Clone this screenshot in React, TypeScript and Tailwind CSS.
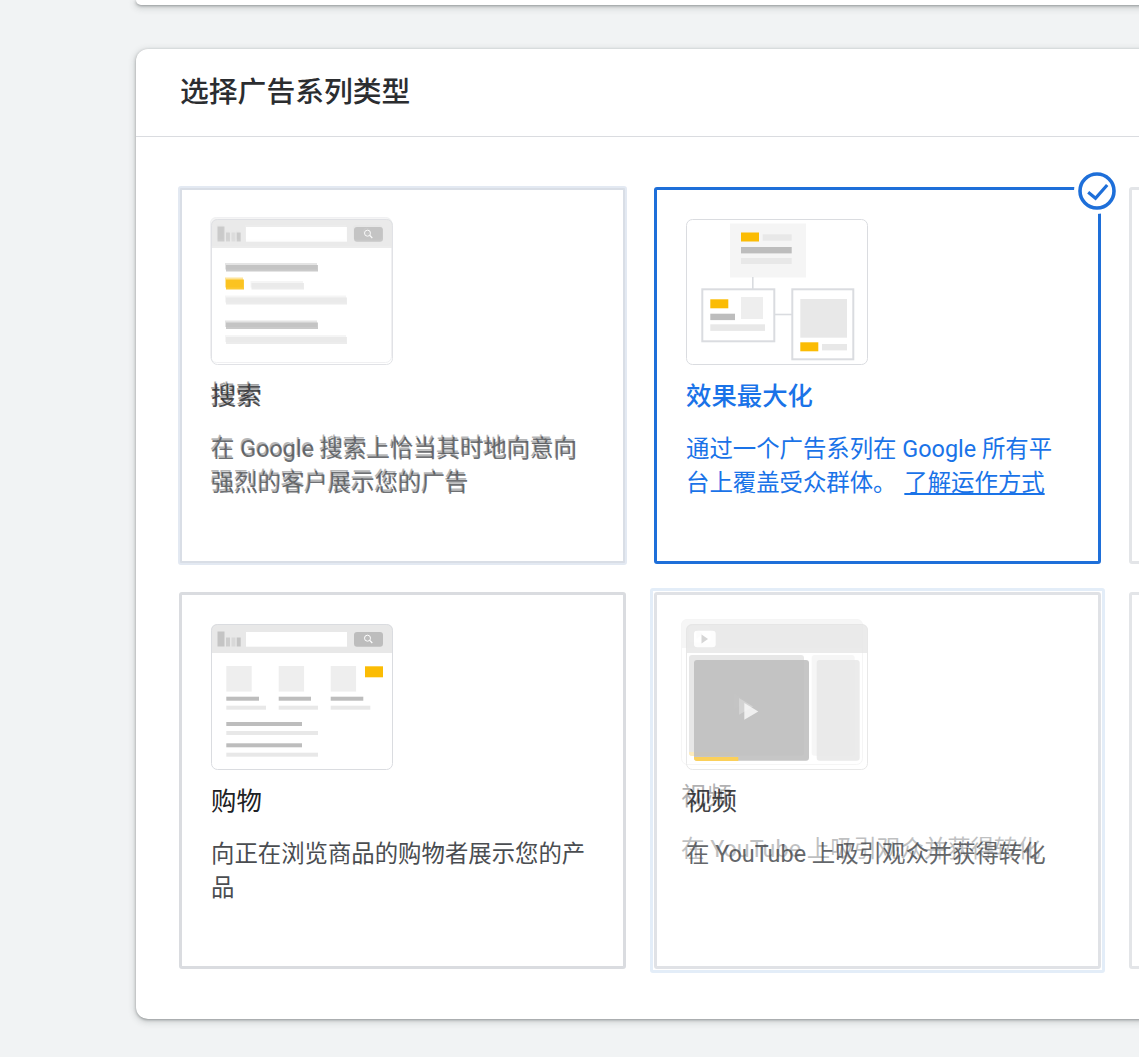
import React from "react";

const LINE = "#bdbdbd";
const SOFT = "#e8e8e8";
const YEL = "#fbbc04";
const EDGE = "#dadce0";

function SearchBar() {
  return (
    <>
      <path d="M0 29V6a6 6 0 0 1 6-6h170a6 6 0 0 1 6 6v23z" fill={SOFT} />
      <rect x="6.5" y="7.5" width="7" height="15" fill="#c4c4c4" />
      <rect x="15" y="13.5" width="4" height="9" fill="#cdcdcd" />
      <rect x="20.5" y="13.5" width="4" height="9" fill="#d8d8d8" />
      <rect x="25.7" y="13.5" width="4" height="9" fill="#c4c4c4" />
      <rect x="35" y="8" width="101" height="14.7" fill="#fff" />
      <rect x="143" y="8" width="29" height="14.7" rx="3" fill={LINE} />
      <circle cx="156.5" cy="14.2" r="3" fill="none" stroke="#fff" strokeWidth="1" />
      <path d="M158.7 16.4l2.6 2.6" stroke="#fff" strokeWidth="1.2" />
    </>
  );
}

function Frame({ children, edge = EDGE }: { children: React.ReactNode; edge?: string }) {
  return (
    <svg width="182" height="146" viewBox="0 0 182 146" className="block">
      {children}
      <rect x="0.5" y="0.5" width="181" height="145" rx="6" fill="none" stroke={edge} />
    </svg>
  );
}

function SearchArt() {
  return (
    <Frame>
      <SearchBar />
      <rect x="15" y="46" width="92" height="6.5" fill={LINE} />
      <rect x="15" y="60.5" width="18" height="10" fill={YEL} />
      <rect x="40.5" y="64" width="52.5" height="6.5" fill={SOFT} />
      <rect x="15" y="78.5" width="121" height="7" fill={SOFT} />
      <rect x="15" y="103.5" width="92" height="6.5" fill={LINE} />
      <rect x="15" y="118" width="121" height="7" fill={SOFT} />
    </Frame>
  );
}

function PmaxArt() {
  return (
    <Frame>
      <rect x="44" y="4.5" width="76" height="54" fill="#f5f5f5" />
      <rect x="55" y="13.5" width="18" height="9" fill={YEL} />
      <rect x="76.7" y="15.3" width="29" height="6.4" fill={SOFT} />
      <rect x="55" y="28" width="50.7" height="6.4" fill={LINE} />
      <rect x="55" y="39" width="50.7" height="6" fill={SOFT} />
      <rect x="66" y="58" width="1.6" height="12" fill={EDGE} />
      <rect x="16.3" y="70.3" width="72" height="52" fill="#fff" stroke={EDGE} strokeWidth="2" />
      <rect x="24.3" y="80.3" width="18" height="9" fill={YEL} />
      <rect x="55" y="78" width="22" height="22" fill="#eeeeee" />
      <rect x="24.3" y="94.7" width="24.7" height="6.4" fill={LINE} />
      <rect x="24.3" y="105.3" width="54.7" height="6.6" fill={SOFT} />
      <rect x="89" y="94.7" width="17" height="1.6" fill={EDGE} />
      <rect x="106.3" y="70.3" width="61" height="70" fill="#fff" stroke={EDGE} strokeWidth="2" />
      <rect x="114.3" y="80" width="46.7" height="38.7" fill={SOFT} />
      <rect x="114.3" y="123.3" width="18" height="9" fill={YEL} />
      <rect x="136" y="125" width="25" height="6.4" fill={SOFT} />
    </Frame>
  );
}

function ShopArt() {
  const cols = [
    [15.3, 48, 55],
    [67.7, 100, 107],
    [119.7, 152.3, 159.3],
  ];
  return (
    <Frame>
      <SearchBar />
      {cols.map(([x, d, l]) => (
        <g key={x}>
          <rect x={x} y="42" width="25.4" height="25.6" fill="#eeeeee" />
          <rect x={x} y="72.7" width={d - x} height="4" fill={LINE} />
          <rect x={x} y="81.7" width={l - x} height="4" fill={SOFT} />
        </g>
      ))}
      <rect x="154" y="42.3" width="18" height="11" fill={YEL} />
      <rect x="15.3" y="98" width="75.7" height="4" fill={LINE} />
      <rect x="15.3" y="107" width="91.7" height="4" fill={SOFT} />
      <rect x="15.3" y="119.3" width="75.7" height="4" fill={LINE} />
      <rect x="15.3" y="128.7" width="91.7" height="4" fill={SOFT} />
    </Frame>
  );
}

function VideoArt() {
  return (
    <Frame edge="#e4e4e4">
      <path d="M0 29V6a6 6 0 0 1 6-6h170a6 6 0 0 1 6 6v23z" fill={SOFT} />
      <rect x="8" y="6.7" width="21.7" height="16.6" rx="3" fill="#fff" />
      <path d="M15.5 10.5l6.5 4.5-6.5 4.5z" fill="#cfcfcf" />
      <rect x="8" y="36" width="115" height="100.7" rx="3" fill={LINE} />
      <rect x="130.7" y="36" width="43" height="100.7" rx="3" fill={SOFT} />
      <path d="M8 133h44.3v4H11a3 3 0 0 1-3-3z" fill="#fbc83e" />
      <path d="M53 74l14 8.4-14 8.3z" fill="#fff" fillOpacity="0.25" />
      <path d="M58.3 79l14 8.4-14 8.3z" fill="#f1f1f1" />
    </Frame>
  );
}

type Content = {
  art: React.ReactNode;
  title: string;
  body: React.ReactNode;
  selected?: boolean;
};

function Body({ art, title, body, selected }: Content) {
  return (
    <>
      {art}
      <h3
        className={
          selected
            ? "mt-[14px] text-[25.4px] leading-[34px] font-medium text-[#1a73e8]"
            : "mt-[14px] text-[25.4px] leading-[34px] font-normal text-[#202124]"
        }
      >
        {title}
      </h3>
      <p
        className={
          selected
            ? "mt-[19px] text-[23.4px] leading-[34px] text-[#1a73e8]"
            : "mt-[19px] text-[23.4px] leading-[34px] text-[#4a4d51]"
        }
      >
        {body}
      </p>
    </>
  );
}

function PlainCard(c: Content) {
  return (
    <div className="h-[377px] rounded-[3px] border-[3px] border-[#dadce0] p-[29px]">
      <Body {...c} />
    </div>
  );
}

function SearchCard(c: Content) {
  return (
    <div className="relative h-[377px] rounded-[3px] border-[3px] border-[#d9dee6] p-[29px]">
      <div className="absolute -inset-[4px] rounded-[3px] border-[2px] border-[#e3e9f2] px-[30px] pt-[29px] pb-[30px]">
        <div className="opacity-40">
          <Body {...c} />
        </div>
      </div>
      <div className="relative opacity-80">
        <Body {...c} />
      </div>
    </div>
  );
}

function VideoCard(c: Content) {
  return (
    <div className="relative h-[377px] rounded-[3px] border-[3px] border-[#e0e2e6] p-[29px]">
      <div className="absolute -inset-[7px] rounded-[3px] border-[3px] border-[#e3edf8] p-[28px]">
        <div className="opacity-35">
          <Body {...c} />
        </div>
      </div>
      <div className="relative opacity-85">
        <Body {...c} />
      </div>
    </div>
  );
}

function SelectedCard(c: Content) {
  return (
    <div className="relative h-[377px] rounded-[3px] border-[3px] border-[#1e6fd9] p-[29px]">
      <Body {...c} selected />
      <div className="absolute -top-[22px] -right-[22px] flex h-[46px] w-[46px] items-center justify-center rounded-full bg-white">
        <svg width="38" height="38" viewBox="0 0 38 38">
          <circle cx="19" cy="19" r="17" fill="#fff" stroke="#1e6fd9" strokeWidth="3.6" />
          <path d="M10.2 20.3l7.3 6 11.7-13.3" fill="none" stroke="#1e6fd9" strokeWidth="3.2" />
        </svg>
      </div>
    </div>
  );
}

export default function App() {
  return (
    <div className="h-[1057px] w-[1139px] overflow-hidden bg-[#f1f3f4] pl-[136px] font-[Roboto,'Noto_Sans_CJK_SC',sans-serif]">
      <div className="h-[5px] w-[1100px] rounded-b-xl bg-white shadow-[0_1px_3px_rgba(60,64,67,0.45),0_2px_6px_2px_rgba(60,64,67,0.15)]" />
      <section className="mt-[44px] w-[1500px] rounded-xl bg-white shadow-[0_1px_3px_rgba(60,64,67,0.45),0_2px_6px_2px_rgba(60,64,67,0.15)]">
        <header className="flex h-[88px] items-center border-b border-[#dadce0] pl-[44px]">
          <h2 className="text-[28.8px] leading-none font-medium text-[#2b2d30]">选择广告系列类型</h2>
        </header>
        <div className="grid grid-cols-[447px_447px_447px] gap-[28px] pt-[50px] pr-[44px] pb-[50px] pl-[43px]">
          <SearchCard art={<SearchArt />} title="搜索" body="在 Google 搜索上恰当其时地向意向强烈的客户展示您的广告" />
          <SelectedCard
            art={<PmaxArt />}
            title="效果最大化"
            body={
              <>
                通过一个广告系列在 Google 所有平台上覆盖受众群体。 <span className="ml-[2px] underline">了解运作方式</span>
              </>
            }
          />
          <div className="h-[377px] rounded-[3px] border-[3px] border-[#e3e5e8]" />
          <PlainCard art={<ShopArt />} title="购物" body="向正在浏览商品的购物者展示您的产品" />
          <VideoCard art={<VideoArt />} title="视频" body="在 YouTube 上吸引观众并获得转化" />
          <div className="h-[377px] rounded-[3px] border-[3px] border-[#e3e5e8]" />
        </div>
      </section>
    </div>
  );
}
